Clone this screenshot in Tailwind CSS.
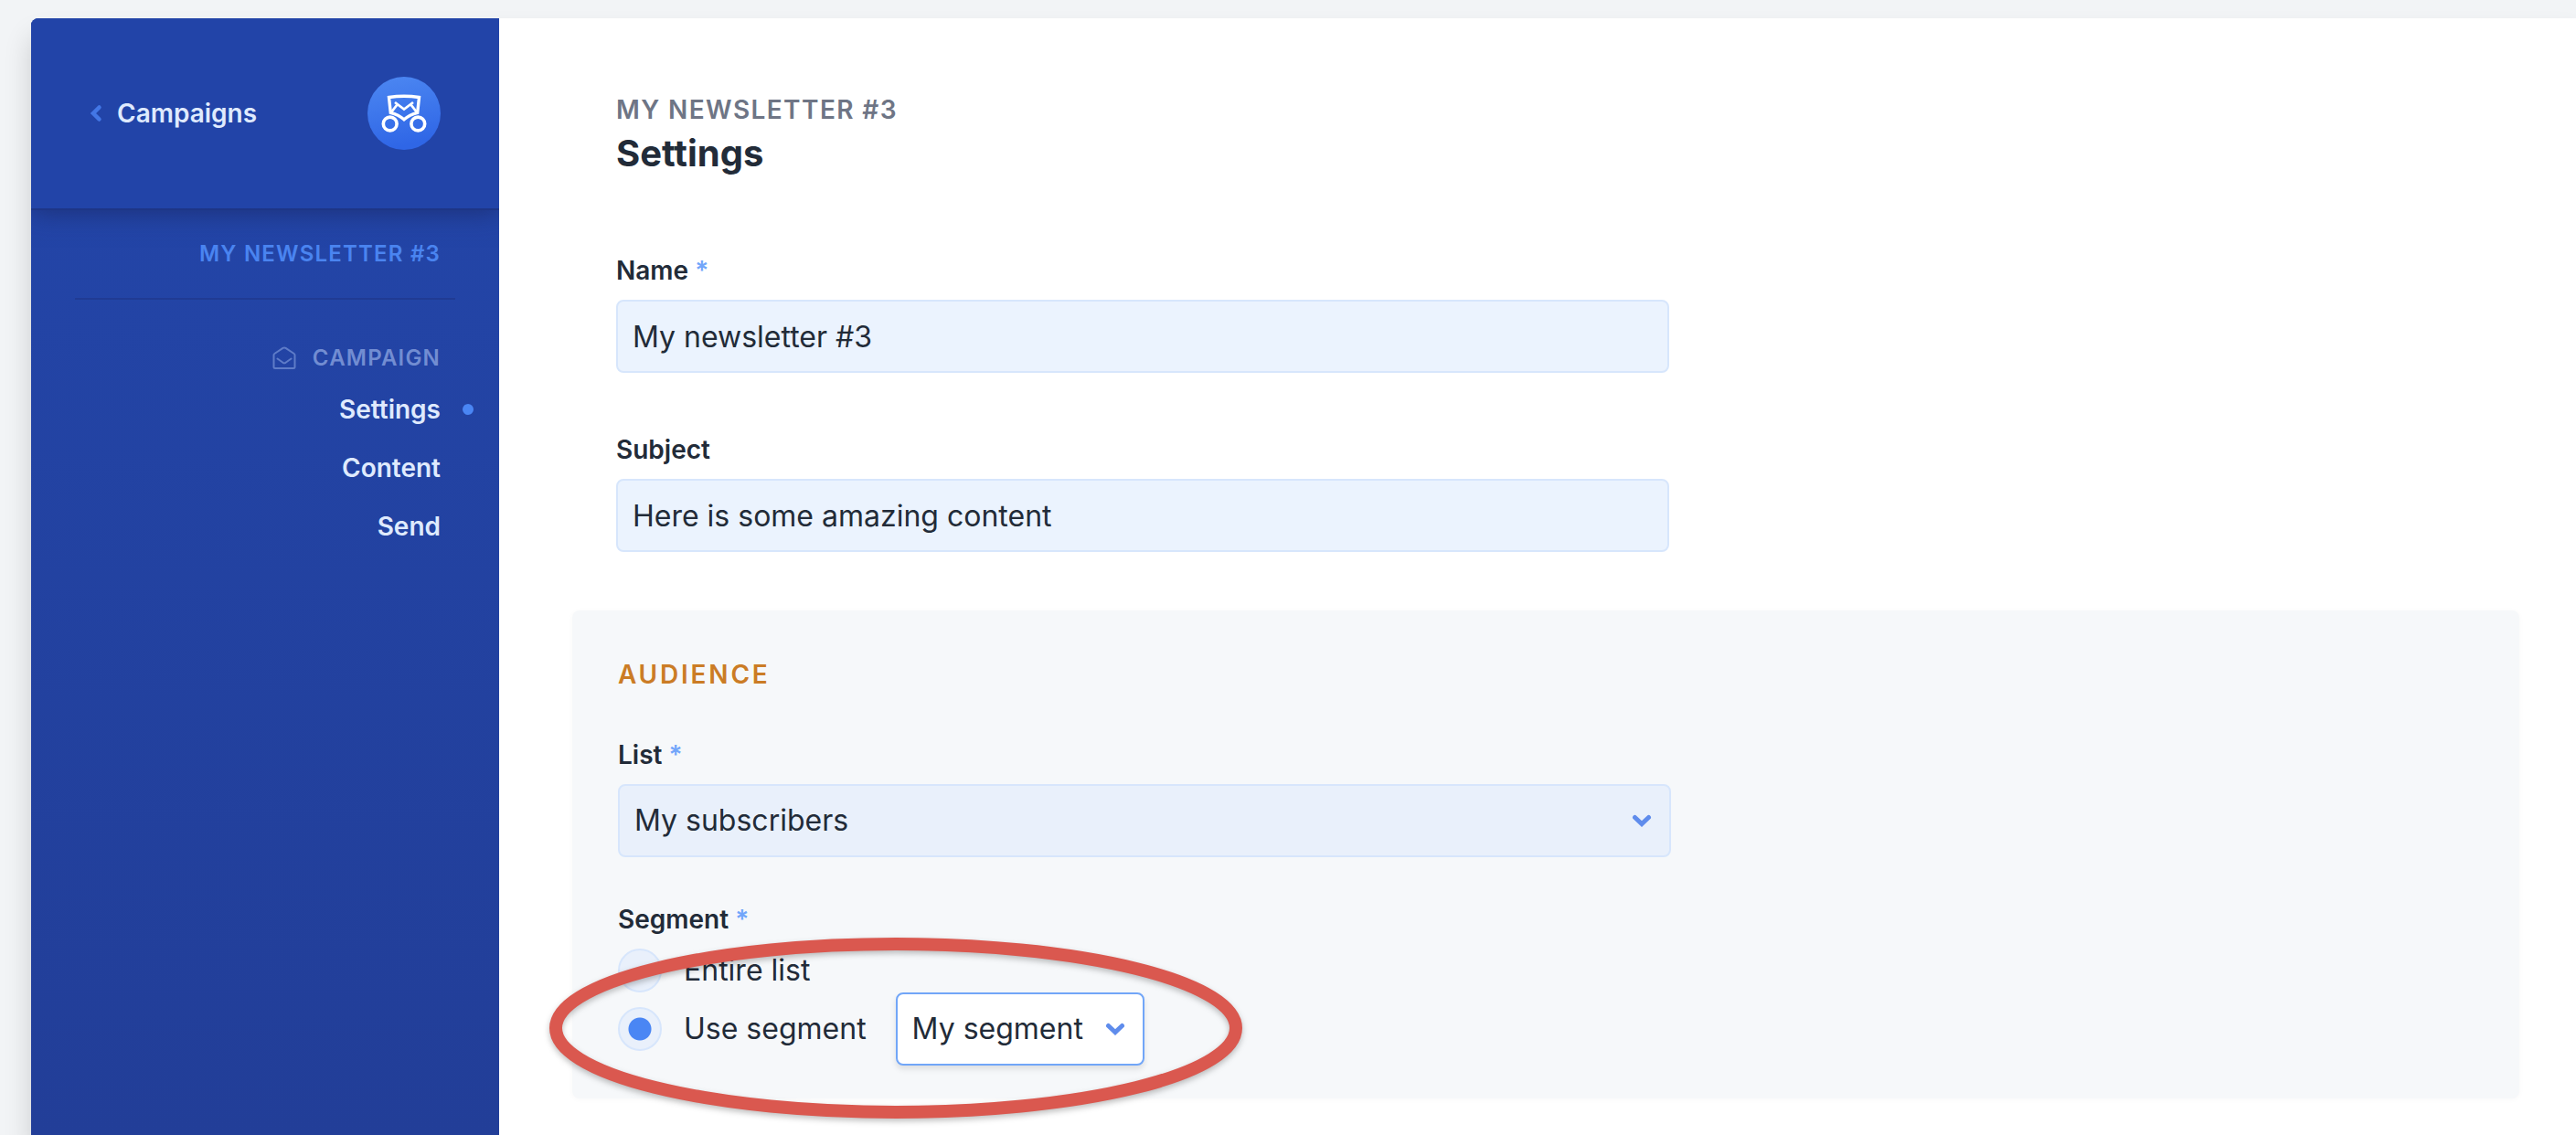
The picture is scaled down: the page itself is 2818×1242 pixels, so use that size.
<!DOCTYPE html>
<html lang="en">
<head>
<meta charset="utf-8">
<meta name="viewport" content="width=device-width, initial-scale=1">
<title>Campaign settings</title>
<script src="https://cdn.jsdelivr.net/npm/@tailwindcss/browser@4"></script>
</head>
<body class="overflow-x-hidden bg-[#f2f4f6] pt-5 pl-[34px] font-['Inter',sans-serif] text-[28px] leading-10 text-[#222b38]">
<div class="flex min-h-[calc(100vh-20px)] rounded-tl-lg bg-white shadow-[0_20px_30px_rgba(0,0,0,0.16)]">

  <aside class="w-[512px] shrink-0 overflow-hidden rounded-tl-lg bg-linear-to-b from-[#2346aa] to-[#223e98]">
    <header class="flex h-52 items-center justify-between bg-[#2244a8] pr-16 pl-16 shadow-[0_2px_0_rgba(30,54,134,0.9),0_4px_26px_rgba(25,40,100,0.7)]">
      <a href="#" class="flex items-center gap-4 font-semibold text-[#dfeafe]">
        <svg class="h-5 w-[14px]" viewBox="0 0 14 20" fill="none" stroke="#4377e6" stroke-width="4.500" stroke-linecap="round" stroke-linejoin="miter" aria-hidden="true"><path d="M10.500 3.500L4 10L10.500 16.500"/></svg>
        Campaigns
      </a>
      <svg class="size-20" viewBox="0 0 80 80" fill="none" role="img" aria-label="Logo">
        <defs><linearGradient id="badge" x1="0" y1="0" x2="0.2" y2="1"><stop stop-color="#4d88f2"/><stop offset="1" stop-color="#2f66e6"/></linearGradient></defs>
        <circle cx="40" cy="40" r="40" fill="url(#badge)"/>
        <g stroke="#fff">
          <path stroke-width="3.400" d="M23.500 22.500Q40 20 56.500 22.500L54.700 39.300Q46 41.500 40 46.800Q34 41.500 25.300 39.300Z"/>
          <path stroke-width="2.800" d="M30 28L40 35.500L50 28M26.300 38.500L32.500 30.500M53.700 38.500L47.500 30.500"/>
          <circle cx="24.700" cy="51.500" r="7.400" stroke-width="3.600"/>
          <circle cx="55.300" cy="51.500" r="7.400" stroke-width="3.600"/>
        </g>
      </svg>
    </header>
    <div class="mx-12 flex h-[100px] items-center justify-end border-b-2 border-[#203b93] pt-0.5 pr-4 text-[24px] font-semibold tracking-wider text-[#4a84f0]">MY NEWSLETTER #3</div>
    <nav class="pt-11 pr-16 font-semibold text-[#dfeafe]" aria-label="Campaign">
      <h2 class="mb-1 flex items-center justify-end gap-[18px] text-[24px] tracking-wider text-[#728dd2]">
        <svg class="size-[26px]" viewBox="0 0 26 26" fill="none" stroke="#5f7cc8" stroke-width="2" stroke-linejoin="round" stroke-linecap="round" aria-hidden="true"><path d="M1.500 9.500Q1.500 8.500 2.300 8L11.500 1.800Q13 1 14.500 1.800L23.700 8Q24.500 8.500 24.500 9.500V22.500Q24.500 24 23 24H3Q1.500 24 1.500 22.500ZM5.500 13.500L11.500 17.800Q13 18.700 14.500 17.800L20.500 13.500"/></svg>
        CAMPAIGN
      </h2>
      <a href="#" aria-current="page" class="relative block text-right leading-16">Settings<span class="absolute top-[26px] -right-9 size-3 rounded-full bg-[#4a86f4]"></span></a>
      <a href="#" class="block text-right leading-16">Content</a>
      <a href="#" class="block text-right leading-16">Send</a>
    </nav>
  </aside>

  <main class="min-w-0 flex-1 pt-20 pr-[62px] pb-10 pl-32">
    <p class="font-semibold tracking-wider text-[#6e7585]">MY NEWSLETTER #3</p>
    <h1 class="mb-20 text-[40px] leading-14 font-bold">Settings</h1>
    <form>
      <label for="name" class="block font-semibold">Name <span class="text-[#72a6fa]">*</span></label>
      <input id="name" type="text" value="My newsletter #3" class="mt-3 mb-16 block h-20 w-full max-w-[1152px] rounded-lg border-2 border-[#d7e6fc] bg-[#ebf3fe] px-4 text-[32px]">
      <label for="subject" class="block font-semibold">Subject</label>
      <input id="subject" type="text" value="Here is some amazing content" class="mt-3 mb-16 block h-20 w-full max-w-[1152px] rounded-lg border-2 border-[#d7e6fc] bg-[#ebf3fe] px-4 text-[32px]">

      <section class="-ml-12 rounded-lg bg-[#f6f8fa] px-[50px] pt-[50px] pb-9 shadow-[0_1px_6px_rgba(0,0,0,0.03)]">
        <h2 class="mb-12 font-semibold tracking-widest text-[#cb7c25]">AUDIENCE</h2>
        <label for="list" class="block font-semibold">List <span class="text-[#72a6fa]">*</span></label>
        <div class="relative mt-3 mb-12 max-w-[1152px]">
          <select id="list" class="block h-20 w-full appearance-none rounded-lg border-2 border-[#d7e6fc] bg-[#e9f0fb] px-4 text-[32px]"><option>My subscribers</option></select>
          <svg class="pointer-events-none absolute top-8 right-[21px] h-4 w-[22px]" viewBox="0 0 22 16" fill="none" stroke="#5f8cec" stroke-width="5" stroke-linecap="round" aria-hidden="true"><path d="M3.500 4.500L11 11.500L18.500 4.500"/></svg>
        </div>
        <fieldset>
          <legend class="font-semibold">Segment <span class="text-[#72a6fa]">*</span></legend>
          <div class="relative mt-3 text-[32px]">
            <label class="flex h-12 w-fit items-center gap-6">
              <input type="radio" name="segment" class="size-12 appearance-none rounded-full border-2 border-[#d7e6fc] bg-[#e9f0fb]">
              Entire list
            </label>
            <div class="flex h-20 items-center gap-8">
              <label class="flex items-center gap-6">
                <input type="radio" name="segment" checked class="size-12 appearance-none rounded-full border-2 border-[#d7e6fc] bg-[#e9f0fb] checked:bg-[radial-gradient(circle,#4a86f4_12px,transparent_13px)]">
                Use segment
              </label>
              <div class="relative">
                <select aria-label="Segment" class="block h-20 w-[272px] appearance-none rounded-lg border-2 border-[#71a6f8] bg-white pr-14 pl-4 shadow-[0_4px_6px_rgba(0,0,0,0.1)]"><option>My segment</option></select>
                <svg class="pointer-events-none absolute top-8 right-[21px] h-4 w-[22px]" viewBox="0 0 22 16" fill="none" stroke="#5f8cec" stroke-width="5" stroke-linecap="round" aria-hidden="true"><path d="M3.500 4.500L11 11.500L18.500 4.500"/></svg>
              </div>
            </div>
            <!-- Highlight ring around the segment picker -->
            <svg class="pointer-events-none absolute -top-[13px] -left-[75px] h-[200px] w-[758px] overflow-visible drop-shadow-[0_3px_3px_rgba(0,0,0,0.25)]" viewBox="0 0 758 200" fill="none" aria-hidden="true"><ellipse cx="379" cy="100" rx="372" ry="92" stroke="#da584f" stroke-width="14"/></svg>
          </div>
        </fieldset>
      </section>
    </form>
  </main>
</div>
</body>
</html>
